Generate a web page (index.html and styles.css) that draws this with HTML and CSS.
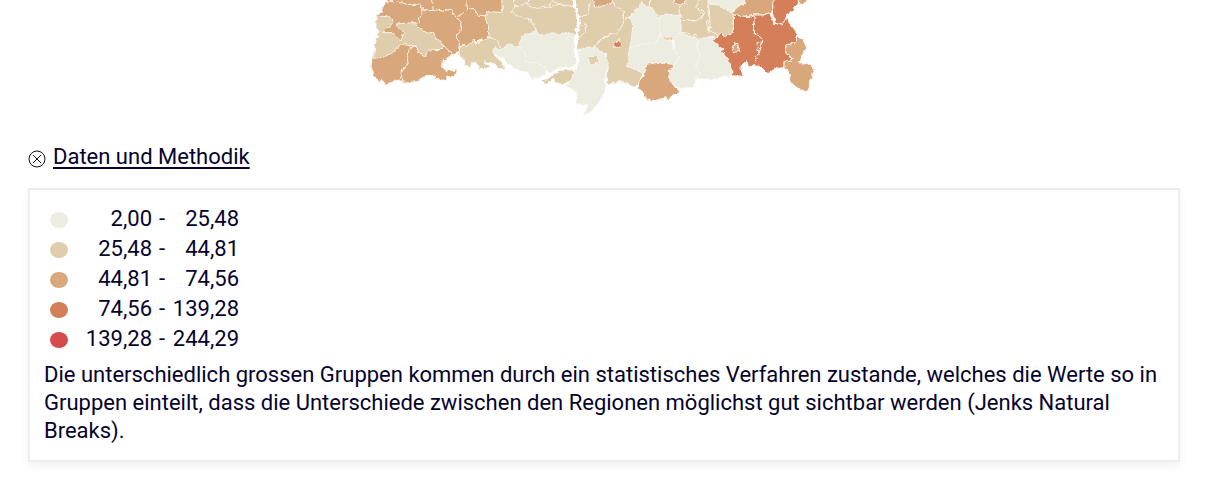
FILE: index.html
```html
<!DOCTYPE html>
<html lang="de">
<head>
<meta charset="utf-8">
<meta name="viewport" content="width=device-width, initial-scale=1">
<title>Daten und Methodik</title>
<link rel="stylesheet" href="styles.css">
</head>
<body>
<main class="page">
  <svg class="map" viewBox="0 0 1464 360" role="img" aria-label="Karte der Regionen">
    <defs>
      <filter id="rough" x="0" y="0" width="1" height="1">
        <feTurbulence type="fractalNoise" baseFrequency="0.08" numOctaves="2" seed="4"/>
        <feDisplacementMap in="SourceGraphic" scale="12" xChannelSelector="R" yChannelSelector="G"/>
      </filter>
    </defs>
    <g filter="url(#rough)">
      <rect class="clear" x="0" y="-30" width="1464" height="390"/>
      <!-- west -->
      <path class="c3" d="M82-9V0L70 20 60 40 48 48V80L57 98 47 125 37 170 33 200 45 232 60 248 66 235 75 253 118 240 130 250 170 245 195 228 222 226 224 238 258 241 262 228 272 232 288 222 292 210 262 212 247 205 250 182 275 165 293 160 300 140 345 130 387 112 430 40V-9Z"/>
      <path class="c2" d="M425-9 427 37 382 35 375 50 385 78 387 112 345 130 342 117 335 130 300 140 297 160 302 175 318 180 312 195 330 200 335 188 350 190 362 210 390 200 372 185 405 192 415 205 435 208 425 185 402 165 440 150 650 150 660 60 640-9Z"/>
      <path class="c2" d="M48 48 88 50 100 65 93 75 82 82 68 98 98 98 118 120 124 122 130 100 108 72 163 68 178 85 200 98 222 98V105L252 138 245 148 205 150 195 172 180 160 165 138 122 133 100 158 65 172 40 175 47 125 57 98 48 80Z"/>
      <path class="line" d="M75 3 110 5 145 14 180 12 187 25 182 45 175 68 163 68M184 30 220 28 248 33 272 28 288 52 303 65 300 95 288 108 298 125 297 150M215 0 220 28M252 138 270 155 275 165M290 55 320 30 340 25 355 45 380 48M318 0 323 28M165 138 148 145 142 175 145 195 125 210 122 220 130 248"/>
      <path class="line" d="M463 0 465 20 455 35 480 50 510 60 525 78 528 95M463 18 500 12 510 0M500 12 530 25 560 22 580 0M387 112 412 120 422 143M560 22 600 12 640 20M580 5 600 12"/>
      <!-- centre -->
      <path class="c2" d="M642-9 658 60 650 150 740 160V255L780 245 820 258 838 255 850 200 940 120 1050 125 1090 118 1120 100V30L1060-9Z"/>
      <g transform="translate(360 0)">
        <path class="c1" d="M42 143 60 150 85 133 100 138 118 140 135 158 133 183 175 190 200 205 195 222 175 235 160 238 140 218 100 205 75 180 40 160Z"/>
        <path class="c1" d="M122 110 160 95 168 90 178 105 200 103 220 98 235 105 260 97 288 105 285 150 292 190 270 205 235 208 205 222 200 205 175 190 133 183 135 158 118 140Z"/>
        <path class="c2" d="M175 240 205 233 225 210 265 208 282 212 275 240 250 252 222 247 218 235 205 252Z"/>
        <path class="c1" d="M290 155 315 142 345 140 372 160 385 190 378 215 375 240 375 270 355 310 330 335 310 348 325 315 290 312 290 275 258 258 275 240 285 210 297 190Z"/>
        <path class="c2" d="M322 170 352 170 354 187 332 197Z"/>
        <path class="c3" d="M332-9 345 20 360 22 397 8V-9Z"/>
        <path class="line" d="M332 0 322 45 295 50M300 78 318 72 315 95 300 112M345 140 358 120 390 105"/>
        <path class="river" d="M280-9 285 20 297 60 290 100 285 150 295 185 285 205 235 208 200 233 165 240"/>
      </g>
      <g transform="translate(720 0)">
        <path class="line" d="M0 125 30 100 50 103 70 70V30L45 20 40 0M75 55 90 52M152 0 150 35 180 50M240 18 235 35 250 60 290 62 310 45 290 22 297 0M245 95 290 108 300 118M330 0 322 20 330 75 325 105M122 0 120 15"/>
        <path class="c1" d="M90 45 118 20 125 8 140 20 160 25 165 40 180 60 178 85 180 105 165 130 120 135 88 145 95 110 98 80Z"/>
        <path class="c1" d="M178 52 200 42 240 48 245 95 220 115 180 105Z"/>
        <path class="c1" d="M88 145 120 135 165 130 180 108 215 125 222 150 238 175 222 195 145 190 130 225 100 205 80 200 88 170Z"/>
        <path class="c1" d="M222 110 245 100 262 105 295 118 290 140 302 165 288 200 302 220 288 235 280 262 240 265 208 245 208 205 222 195 240 175 222 150Z"/>
        <path class="c1" d="M300 118 340 108 365 135 385 155 405 180 412 225 365 230 340 238 288 235 302 220 288 200 302 165 290 140Z"/>
        <path class="c3" d="M140 193 175 187 190 190 215 193 222 203 205 212 212 240 225 262 240 278 212 288 205 302 198 293 165 302 138 300 125 270 113 265 118 240 132 228Z"/>
        <path class="c4" d="M40 128 50 128 58 117 62 142 42 140Z"/>
        <path class="c3" d="M218-9 225 8 240 15 255 13 260-9Z"/>
      </g>
      <!-- east -->
      <g transform="translate(1020 0)">
        <path class="c1" d="M22-9 25 12 55 15 75 28 95 35 135 12 138-9Z"/>
        <path class="line" d="M25 15 30 45 22 65 25 90 65 110M0 25 12 35 8 55 0 62"/>
        <path class="c3" d="M92 37 105 32 120 15 135 12 138-9H222L217 35 190 45 163 45 145 50 100 45Z"/>
        <path class="c4" d="M100 45 145 50 163 45 160 95 185 115 182 150 165 180 163 197 145 200 140 182 122 200 130 228 98 228 90 190 85 180 65 155 68 145 37 122 65 100 72 110 100 100Z"/>
        <path class="c4" d="M163 45 190 45 210 38 222 70 245 72 255 50 265 65 285 90 290 105 285 128 258 135V160L280 178 252 185V203L228 205 205 220 185 200 163 197 165 180 182 150 185 115 160 95Z"/>
        <path class="c4" d="M220-9H295V12L262 45 250 70 230 72 217 40Z"/>
        <path class="c3" d="M295-9H322V0L308 14 296 10Z"/>
        <path class="c3" d="M290 105 305 115 320 142 305 170 298 185 305 192 332 190 342 215 328 245V272L315 275 285 260 268 240 272 225 252 203V185L282 178 258 160V135L287 128Z"/>
        <path class="c3" d="M97 152 102 138 106 129 113 132 119 155 108 156Z"/>
        <path class="line" d="M180 130 170 130 175 145 168 152 183 150"/>
      </g>
    </g>
  </svg>

  <button class="toggle" type="button" aria-expanded="true" aria-controls="method">
    <svg class="toggle-icon" viewBox="0 0 18 18" aria-hidden="true">
      <circle cx="9" cy="9" r="8"/>
      <path d="M5 5l8 8M13 5l-8 8"/>
    </svg>
    <span class="toggle-label">Daten und Methodik</span>
  </button>

  <section class="panel" id="method">
    <table class="legend">
      <tbody>
        <tr><td class="key"><span class="dot dot-1"></span></td><td class="from">2,00</td><td class="dash">-</td><td class="to">25,48</td></tr>
        <tr><td class="key"><span class="dot dot-2"></span></td><td class="from">25,48</td><td class="dash">-</td><td class="to">44,81</td></tr>
        <tr><td class="key"><span class="dot dot-3"></span></td><td class="from">44,81</td><td class="dash">-</td><td class="to">74,56</td></tr>
        <tr><td class="key"><span class="dot dot-4"></span></td><td class="from">74,56</td><td class="dash">-</td><td class="to">139,28</td></tr>
        <tr><td class="key"><span class="dot dot-5"></span></td><td class="from">139,28</td><td class="dash">-</td><td class="to">244,29</td></tr>
      </tbody>
    </table>
    <p class="note">Die unterschiedlich grossen Gruppen kommen durch ein statistisches Verfahren zustande, welches die Werte so in Gruppen einteilt, dass die Unterschiede zwischen den Regionen möglichst gut sichtbar werden (Jenks Natural Breaks).</p>
  </section>
</main>
</body>
</html>
```
FILE: styles.css
```css
body {
  margin: 0;
  background: #fff;
  color: #05032d;
  font-family: Roboto, "Liberation Sans", sans-serif;
  font-size: 22px;
  line-height: 28px;
}

.page {
  padding: 0 34px 16px 28px;
}

.map {
  display: block;
  width: 100%;
  max-width: 488px;
  margin: 0 auto 23px;
}

.map path {
  stroke: #faf5ec;
  stroke-width: 3;
  stroke-linejoin: round;
}

.map .clear { fill: none; }
.map .c1 { fill: #ecece0; }
.map .c2 { fill: #dfcdab; }
.map .c3 { fill: #d9a77b; }
.map .c4 { fill: #d57e5a; }
.map .line { fill: none; }
.map .river { fill: none; stroke: #fff; stroke-width: 9; }

.toggle {
  display: flex;
  align-items: center;
  gap: 7px;
  margin: 0 0 17px;
  padding: 0;
  border: 0;
  background: none;
  color: inherit;
  font: inherit;
  cursor: pointer;
}

.toggle-icon {
  width: 18px;
  height: 18px;
  margin-top: 4px;
  fill: none;
  stroke: #111;
  stroke-width: 1;
}

.toggle-label {
  text-decoration: underline;
  text-decoration-thickness: 2px;
  text-underline-offset: 3px;
}

.panel {
  padding: 14px 14px 15px;
  border: 2px solid #eee;
  box-shadow: 0 4px 8px rgba(0, 0, 0, 0.06);
}

.legend {
  border-collapse: collapse;
}

.legend td {
  height: 30px;
  padding: 0;
  line-height: 30px;
  text-align: right;
}

.legend .key {
  width: 24px;
}

.dot {
  display: block;
  width: 18px;
  height: 16px;
  margin: 2px 0 0 6px;
  border-radius: 50%;
}

.dot-1 { background: #ecece0; }
.dot-2 { background: #dfcdab; }
.dot-3 { background: #d9a77b; }
.dot-4 { background: #d57e5a; }
.dot-5 { background: #d54c4e; }

.legend .from { width: 84px; }
.legend .dash { width: 13px; }
.legend .to { width: 74px; }

.note {
  margin: 7px 0 0;
}
```
